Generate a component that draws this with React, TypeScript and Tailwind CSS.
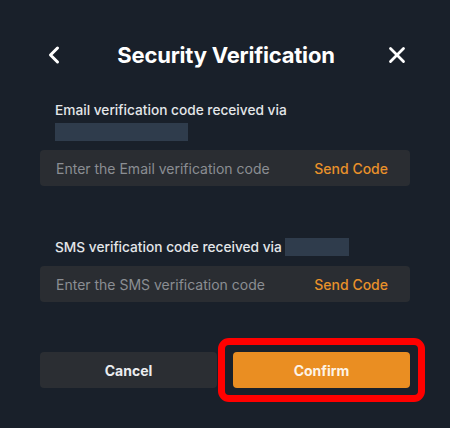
import { ChevronLeft, X } from "lucide-react";

const font = { fontFamily: 'Inter, "Liberation Sans", Arial, sans-serif' };

const CodeInput = ({ placeholder }: { placeholder: string }) => (
	<div className="flex h-9 items-center justify-between rounded bg-[#2a2d32] pl-4 pr-[22px]">
		<span className="text-[14px] text-[#8b8e93]">{placeholder}</span>
		<span className="text-[14px] font-medium text-[#e8912a]">Send Code</span>
	</div>
);

export default function App() {
	return (
		<div className="h-[428px] w-[450px] bg-[#19202a] px-10 text-white" style={font}>
			{/* Header */}
			<div className="flex h-[110px] items-center justify-between">
				<ChevronLeft className="h-7 w-7 text-white" strokeWidth={2.6} />
				<h1 className="text-[22px] font-bold tracking-[-0.2px]">Security Verification</h1>
				<X className="h-[26px] w-[26px] text-white" strokeWidth={2.6} />
			</div>

			{/* Email */}
			<div className="-mt-[8px] pl-[15px]">
				<p className="text-[13.7px] font-medium leading-4 text-[#e4e6e9]">Email verification code received via</p>
				<div className="mt-[5px] h-[18px] w-[133px] bg-[#2f3c4c]" />
			</div>
			<div className="mt-[9px]">
				<CodeInput placeholder="Enter the Email verification code" />
			</div>

			{/* SMS */}
			<div className="mt-[52px] flex items-center pl-[15px]">
				<p className="text-[13.7px] font-medium leading-4 text-[#e4e6e9]">SMS verification code received via</p>
				<div className="ml-[3px] h-[18px] w-[64px] bg-[#2f3c4c]" />
			</div>
			<div className="mt-[10px]">
				<CodeInput placeholder="Enter the SMS verification code" />
			</div>

			{/* Actions */}
			<div className="mt-[50px] flex gap-4">
				<button className="h-9 flex-1 rounded bg-[#2b2e33] text-[14px] font-bold text-[#eaecef]">Cancel</button>
				<div className="relative flex-1">
					<button className="h-9 w-full rounded bg-[#ea8e22] text-[14px] font-bold text-[#fdf3e6]">Confirm</button>
					<div className="absolute -bottom-[14px] -left-[15px] -right-[15px] -top-[14px] rounded-[11px] border-[7px] border-[#ff0000]" />
				</div>
			</div>
		</div>
	);
}
